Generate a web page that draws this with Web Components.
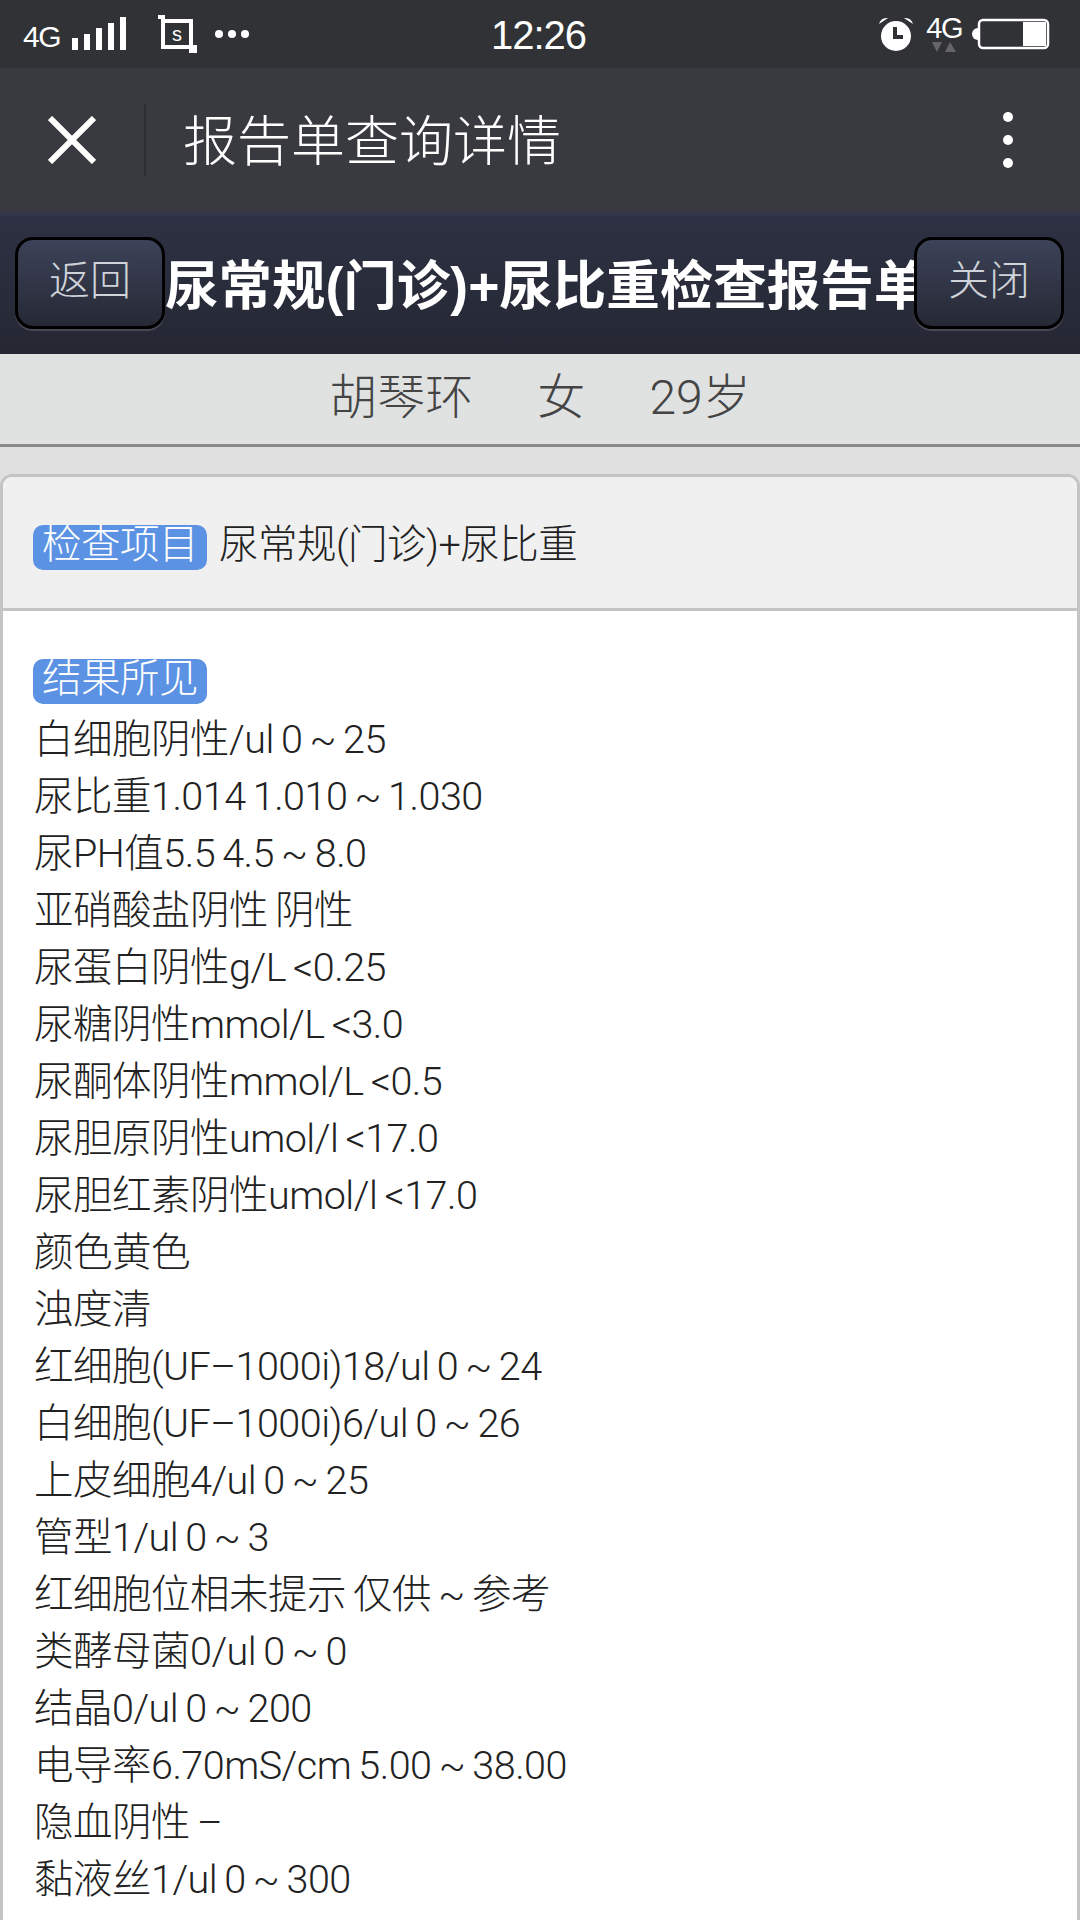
<!DOCTYPE html>
<html lang="zh-CN">
<head>
<meta charset="utf-8">
<title>报告单查询详情</title>
<style>
  html, body { margin: 0; padding: 0; height: 1920px; overflow: hidden; background: #fff; }
  body { font-family: Roboto, "Noto Sans CJK SC", sans-serif; font-weight: 300; }
  report-line { display: block; }
</style>
</head>
<body>
<status-bar></status-bar>
<nav-bar>报告单查询详情</nav-bar>
<report-header>尿常规(门诊)+尿比重检查报告单</report-header>
<patient-info name="胡琴环" sex="女" age="29岁"></patient-info>
<report-card item="尿常规(门诊)+尿比重">
  <report-line>白细胞阴性/ul 0 ~ 25</report-line>
  <report-line>尿比重1.014 1.010 ~ 1.030</report-line>
  <report-line>尿PH值5.5 4.5 ~ 8.0</report-line>
  <report-line>亚硝酸盐阴性 阴性</report-line>
  <report-line>尿蛋白阴性g/L &lt;0.25</report-line>
  <report-line>尿糖阴性mmol/L &lt;3.0</report-line>
  <report-line>尿酮体阴性mmol/L &lt;0.5</report-line>
  <report-line>尿胆原阴性umol/l &lt;17.0</report-line>
  <report-line>尿胆红素阴性umol/l &lt;17.0</report-line>
  <report-line>颜色黄色</report-line>
  <report-line>浊度清</report-line>
  <report-line>红细胞(UF–1000i)18/ul 0 ~ 24</report-line>
  <report-line>白细胞(UF–1000i)6/ul 0 ~ 26</report-line>
  <report-line>上皮细胞4/ul 0 ~ 25</report-line>
  <report-line>管型1/ul 0 ~ 3</report-line>
  <report-line>红细胞位相未提示 仅供 ~ 参考</report-line>
  <report-line>类酵母菌0/ul 0 ~ 0</report-line>
  <report-line>结晶0/ul 0 ~ 200</report-line>
  <report-line>电导率6.70mS/cm 5.00 ~ 38.00</report-line>
  <report-line>隐血阴性 –</report-line>
  <report-line>黏液丝1/ul 0 ~ 300</report-line>
</report-card>

<script>
class StatusBar extends HTMLElement {
    constructor() {
        super();
        this.attachShadow({ mode: 'open' });
        this.shadowRoot.innerHTML = `
            <style>
                :host {
                    display: flex;
                    align-items: center;
                    height: 68px;
                    background: #313236;
                    color: #fff;
                    font-family: "Liberation Sans", sans-serif;
                    font-weight: 400;
                    box-sizing: border-box;
                    padding: 0 30px 0 23px;
                }
                .side { flex: 1; display: flex; align-items: center; }
                .right { justify-content: flex-end; }
                .net { font-size: 30px; letter-spacing: -1.5px; padding-top: 6px; }
                .time { font-size: 40px; letter-spacing: -1px; padding: 3px 0 0 4px; }
                svg { display: block; }
                .up { display: flex; flex-direction: column; align-items: center; margin: 0 10px 0 12px; }
                .up .net { font-size: 29px; line-height: 26px; padding-top: 0; }
            </style>
            <div class="side">
                <span class="net">4G</span>
                <svg style="margin-left:11px" width="56" height="36" viewBox="0 0 56 36" fill="#fff">
                    <rect x="1" y="22" width="6" height="12"/><rect x="13" y="18" width="6" height="16"/>
                    <rect x="25" y="12" width="6" height="22"/><rect x="37" y="7" width="6" height="27"/>
                    <rect x="49" y="1" width="6" height="33"/>
                </svg>
                <svg style="margin-left:30px" width="40" height="38" viewBox="0 0 40 38">
                    <path d="M1 2H6V6H34V32H39V36H34V32H6V6" fill="none" stroke="#fff" stroke-width="4"/>
                    <text x="20" y="26" text-anchor="middle" fill="#fff" font-size="20" font-family="Liberation Sans">s</text>
                </svg>
                <svg style="margin-left:17px" width="36" height="12" viewBox="0 0 36 12" fill="#fff">
                    <circle cx="5" cy="6" r="4"/><circle cx="18" cy="6" r="4"/><circle cx="31" cy="6" r="4"/>
                </svg>
            </div>
            <div class="time">12:26</div>
            <div class="side right">
                <svg width="36" height="36" viewBox="0 0 36 36">
                    <circle cx="18" cy="20" r="15" fill="#fff"/>
                    <path d="M1 8 Q3 1 10 2 Z M35 8 Q33 1 26 2 Z" fill="#fff"/>
                    <path d="M17 11V21H25" fill="none" stroke="#313236" stroke-width="4"/>
                </svg>
                <div class="up">
                    <span class="net">4G</span>
                    <svg width="26" height="12" viewBox="0 0 26 12" fill="#666">
                        <path d="M1 1H11L6 11Z M14 11L19 1L25 11Z"/>
                    </svg>
                </div>
                <svg width="78" height="32" viewBox="0 0 78 32">
                    <path d="M6 10a4 4 0 0 0 0 12Z" fill="#fff"/>
                    <rect x="7" y="2" width="69" height="28" rx="4" fill="none" stroke="#fff" stroke-width="2.5"/>
                    <rect x="51" y="4" width="23" height="24" fill="#fff"/>
                </svg>
            </div>
        `;
    }
}

class NavBar extends HTMLElement {
    constructor() {
        super();
        this.attachShadow({ mode: 'open' });
        this.shadowRoot.innerHTML = `
            <style>
                :host {
                    display: flex;
                    align-items: center;
                    height: 148px;
                    box-sizing: border-box;
                    border-bottom: 4px solid #33354a;
                    background: #393a3f;
                    color: #fff;
                    padding: 0 0 0 48px;
                    font-family: "Noto Sans CJK SC", sans-serif;
                    font-weight: 300;
                }
                svg { display: block; flex: none; }
                .divider { width: 2px; height: 72px; background: #2e2f33; margin-left: 48px; }
                .title { flex: 1; margin-left: 37px; padding-bottom: 5px; font-size: 54px; line-height: 1; }
                .more { margin-right: 66px; }
            </style>
            <svg width="48" height="48" viewBox="0 0 48 48"><path d="M2 2L46 46M46 2L2 46" stroke="#fff" stroke-width="6"/></svg>
            <div class="divider"></div>
            <div class="title"><slot></slot></div>
            <svg class="more" width="12" height="58" viewBox="0 0 12 58" fill="#fff">
                <circle cx="6" cy="6" r="5"/><circle cx="6" cy="29" r="5"/><circle cx="6" cy="52" r="5"/>
            </svg>
        `;
    }
}

class HeaderButton extends HTMLElement {
    constructor() {
        super();
        this.attachShadow({ mode: 'open' });
        this.shadowRoot.innerHTML = `
            <style>
                :host {
                    display: flex;
                    flex: none;
                    align-items: center;
                    justify-content: center;
                    width: 150px;
                    height: 92px;
                    box-sizing: border-box;
                    padding-bottom: 13px;
                    border: 3px solid #000;
                    border-radius: 18px;
                    background: linear-gradient(#3c4258, #262935);
                    box-shadow: 0 2px 0 #474a55;
                    color: #d0d3d9;
                    font-size: 41px;
                    font-family: "Noto Sans CJK SC", sans-serif;
                    font-weight: 300;
                    position: relative;
                    z-index: 1;
                }
            </style>
            <slot></slot>
        `;
    }
}

class ReportHeader extends HTMLElement {
    constructor() {
        super();
        this.attachShadow({ mode: 'open' });
        this.shadowRoot.innerHTML = `
            <style>
                :host {
                    display: flex;
                    align-items: center;
                    height: 138px;
                    box-sizing: border-box;
                    padding: 0 16px 4px 15px;
                    background: linear-gradient(#2d3143, #252833);
                }
                .title {
                    flex: 1;
                    min-width: 0;
                    padding-bottom: 4px;
                    text-align: center;
                    white-space: nowrap;
                    color: #fff;
                    font-family: "Liberation Sans", "Noto Sans CJK SC", sans-serif;
                    font-size: 53.5px;
                    font-weight: 700;
                }
            </style>
            <header-button>返回</header-button>
            <div class="title"><slot></slot></div>
            <header-button>关闭</header-button>
        `;
    }
}

class PatientInfo extends HTMLElement {
    constructor() {
        super();
        this.attachShadow({ mode: 'open' });
        this.shadowRoot.innerHTML = `
            <style>
                :host {
                    display: flex;
                    align-items: center;
                    justify-content: center;
                    gap: 64px;
                    height: 93px;
                    box-sizing: border-box;
                    padding-bottom: 12px;
                    border-bottom: 3px solid #8a8a8a;
                    background: #e0e1e1;
                    color: #444;
                    font-size: 48px;
                    font-family: Roboto, "Noto Sans CJK SC", sans-serif;
                    font-weight: 300;
                }
            </style>
            <span>${this.getAttribute('name')}</span>
            <span>${this.getAttribute('sex')}</span>
            <span>${this.getAttribute('age')}</span>
        `;
    }
}

class TagLabel extends HTMLElement {
    constructor() {
        super();
        this.attachShadow({ mode: 'open' });
        this.shadowRoot.innerHTML = `
            <style>
                :host {
                    display: inline-block;
                    box-sizing: border-box;
                    width: 174px;
                    height: 45px;
                    line-height: 39px;
                    text-align: center;
                    white-space: nowrap;
                    border-radius: 10px;
                    background: #5b92e3;
                    color: #fff;
                }
            </style>
            <slot></slot>
        `;
    }
}

class ReportCard extends HTMLElement {
    constructor() {
        super();
        this.attachShadow({ mode: 'open' });
        this.shadowRoot.innerHTML = `
            <style>
                :host {
                    display: block;
                    background: #e0e0e0;
                    padding-top: 27px;
                    color: #222;
                    font-size: 39.5px;
                    letter-spacing: -0.5px;
                    word-spacing: -2px;
                    line-height: 57px;
                }
                .card {
                    border: 3px solid #c4c4c4;
                    border-bottom: 0;
                    border-radius: 12px 12px 0 0;
                    background: #fff;
                    height: 1500px;
                }
                .head {
                    display: flex;
                    align-items: center;
                    gap: 12px;
                    height: 134px;
                    box-sizing: border-box;
                    padding: 3px 0 0 30px;
                    border-bottom: 3px solid #c4c4c4;
                    border-radius: 9px 9px 0 0;
                    background: #f0f0f0;
                }
                .head tag-label { margin-top: 7px; }
                .body { padding: 41px 30px 0 31px; }
                .tag-row { display: flex; align-items: center; height: 59px; margin-left: -1px; }
            </style>
            <div class="card">
                <div class="head">
                    <tag-label>检查项目</tag-label>
                    <span>${this.getAttribute('item')}</span>
                </div>
                <div class="body">
                    <div class="tag-row"><tag-label>结果所见</tag-label></div>
                    <slot></slot>
                </div>
            </div>
        `;
    }
}

customElements.define('status-bar', StatusBar);
customElements.define('nav-bar', NavBar);
customElements.define('header-button', HeaderButton);
customElements.define('report-header', ReportHeader);
customElements.define('patient-info', PatientInfo);
customElements.define('tag-label', TagLabel);
customElements.define('report-card', ReportCard);
</script>
</body>
</html>
